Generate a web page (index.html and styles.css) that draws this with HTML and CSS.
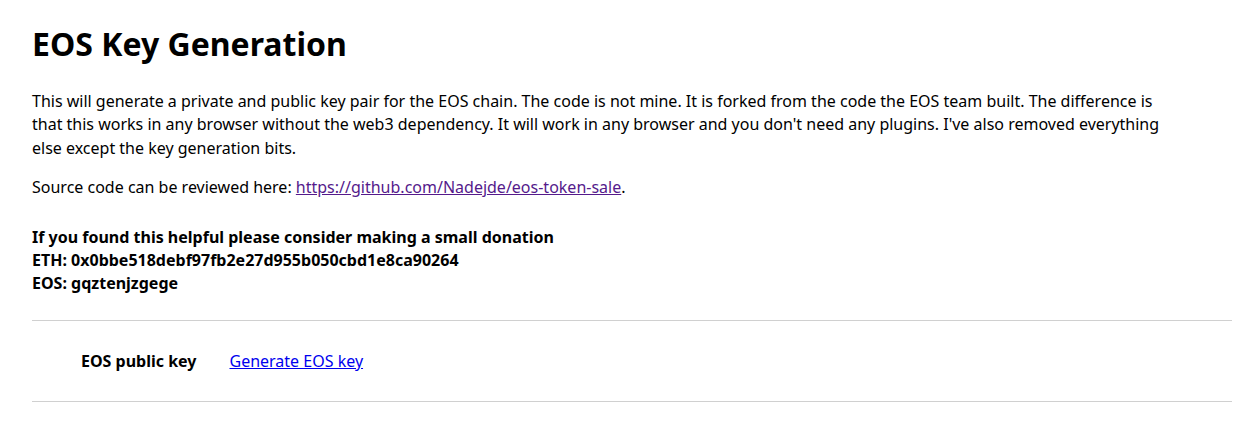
FILE: index.html
```html
<!DOCTYPE html>
<html>
<head>
<meta charset="utf-8">
<title>EOS Key Generation</title>
<link rel="stylesheet" href="styles.css">
</head>
<body>
<main class="page">
  <h1 class="title">EOS Key Generation</h1>
  <p class="text">This will generate a private and public key pair for the EOS chain. The code is not mine. It is forked from the code the EOS team built. The difference is that this works in any browser without the web3 dependency. It will work in any browser and you don't need any plugins. I've also removed everything else except the key generation bits.</p>
  <p class="text">Source code can be reviewed here: <a class="visited" href="#">https://github.com/Nadejde/eos-token-sale</a>.</p>
  <p class="text donate">If you found this helpful please consider making a small donation<br>ETH: 0x0bbe518debf97fb2e27d955b050cbd1e8ca90264<br>EOS: gqztenjzgege</p>
  <hr class="rule">
  <div class="key-row">
    <span class="key-label">EOS public key</span>
    <a class="link" href="#">Generate EOS key</a>
  </div>
  <hr class="rule">
</main>
</body>
</html>
```
FILE: styles.css
```css
html, body {
  margin: 0;
  padding: 0;
  background: #fff;
}
body {
  font-family: "Noto Sans", "Open Sans", sans-serif;
  font-size: 16px;
  color: #000;
}
.page {
  padding: 24px 24px 0 32px;
}
.title {
  font-size: 32px;
  font-weight: 700;
  margin: 0 0 26px;
  line-height: 40px;
}
.text {
  margin: 0 0 16px;
  line-height: 23.4px;
  max-width: 1145px;
}
.donate {
  font-weight: 700;
  margin-top: 26px;
  margin-bottom: 24px;
}
.visited {
  color: #551a8b;
}
.link {
  color: #0000ee;
}
.rule {
  border: 0;
  border-top: 1px solid #d0d0d0;
  margin: 0;
  height: 0;
}
.key-row {
  display: flex;
  align-items: center;
  gap: 33px;
  padding: 28px 0 28px 49px;
  line-height: 24px;
}
.key-label {
  font-weight: 700;
}
```
